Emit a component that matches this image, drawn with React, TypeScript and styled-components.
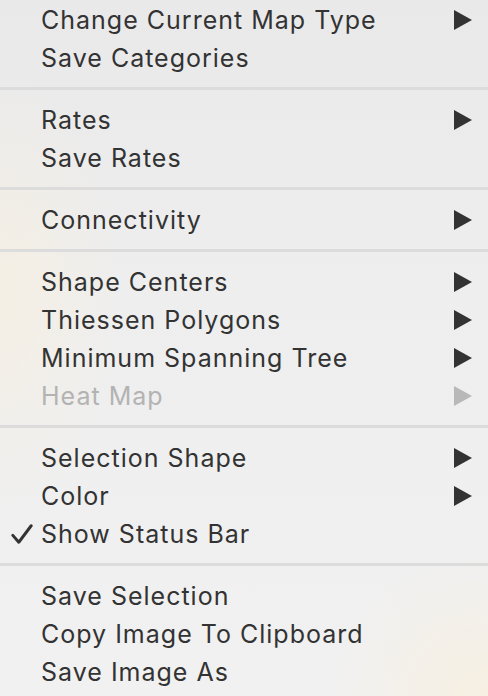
import React from 'react';
import styled, { createGlobalStyle } from 'styled-components';

const GlobalStyle = createGlobalStyle`
    html, body {
        margin: 0;
        padding: 0;
    }
    body {
        width: 488px;
        height: 696px;
        overflow: hidden;
        font-family: Inter, "Noto Sans", sans-serif;
    }
`;

type Item = {
    label: string;
    submenu?: boolean;
    disabled?: boolean;
    checked?: boolean;
};

const groups: Item[][] = [
    [{ label: 'Change Current Map Type', submenu: true }, { label: 'Save Categories' }],
    [{ label: 'Rates', submenu: true }, { label: 'Save Rates' }],
    [{ label: 'Connectivity', submenu: true }],
    [
        { label: 'Shape Centers', submenu: true },
        { label: 'Thiessen Polygons', submenu: true },
        { label: 'Minimum Spanning Tree', submenu: true },
        { label: 'Heat Map', submenu: true, disabled: true },
    ],
    [
        { label: 'Selection Shape', submenu: true },
        { label: 'Color', submenu: true },
        { label: 'Show Status Bar', checked: true },
    ],
    [{ label: 'Save Selection' }, { label: 'Copy Image To Clipboard' }, { label: 'Save Image As' }],
];

const Arrow = ({ disabled }: { disabled?: boolean }) => (
    <ArrowIcon viewBox='0 0 18 20' $disabled={disabled}>
        <polygon points='0,0 18,10 0,20' />
    </ArrowIcon>
);

const Check = () => (
    <CheckIcon viewBox='0 0 24 24'>
        <path d='M2 13.5 L8.5 21 L22 3' />
    </CheckIcon>
);

export default function App() {
    return (
        <>
            <GlobalStyle />
            <Menu>
                {groups.map((group, gi) => (
                    <React.Fragment key={gi}>
                        {gi > 0 && <Separator />}
                        <Group>
                            {group.map((item) => (
                                <Row key={item.label} $disabled={item.disabled}>
                                    <CheckCell>{item.checked && <Check />}</CheckCell>
                                    <Label>{item.label}</Label>
                                    {item.submenu && <Arrow disabled={item.disabled} />}
                                </Row>
                            ))}
                        </Group>
                    </React.Fragment>
                ))}
            </Menu>
        </>
    );
}

const Menu = styled.div`
    width: 488px;
    height: 696px;
    display: flex;
    flex-direction: column;
    padding-top: 1px;
    box-sizing: border-box;
    background:
        radial-gradient(ellipse 120px 220px at 0px 290px, rgba(250, 240, 220, 0.55), transparent),
        radial-gradient(ellipse 160px 140px at 488px 696px, rgba(250, 238, 215, 0.6), transparent),
        linear-gradient(180deg, #e9e9ea 0%, #eeeeee 40%, #f1f1f1 100%);
`;

const Group = styled.div`
    display: flex;
    flex-direction: column;
`;

const Separator = styled.div`
    height: 3px;
    margin: 10px 0 11px;
    background: #dcdcdc;
`;

const Row = styled.div<{ $disabled?: boolean }>`
    height: 38px;
    display: flex;
    align-items: center;
    color: ${(p) => (p.$disabled ? '#b3b3b3' : '#333333')};
`;

const CheckCell = styled.div`
    width: 41px;
    display: flex;
    justify-content: flex-end;
    padding-right: 8px;
    box-sizing: border-box;
`;

const CheckIcon = styled.svg`
    width: 22px;
    height: 22px;
    fill: none;
    stroke: #333333;
    stroke-width: 3.2;
    stroke-linecap: round;
    stroke-linejoin: round;
`;

const Label = styled.span`
    flex: 1;
    font-size: 25px;
    letter-spacing: 1px;
    white-space: nowrap;
`;

const ArrowIcon = styled.svg<{ $disabled?: boolean }>`
    width: 18px;
    height: 20px;
    margin-right: 16px;
    fill: ${(p) => (p.$disabled ? '#b8b8b8' : '#333333')};
`;
